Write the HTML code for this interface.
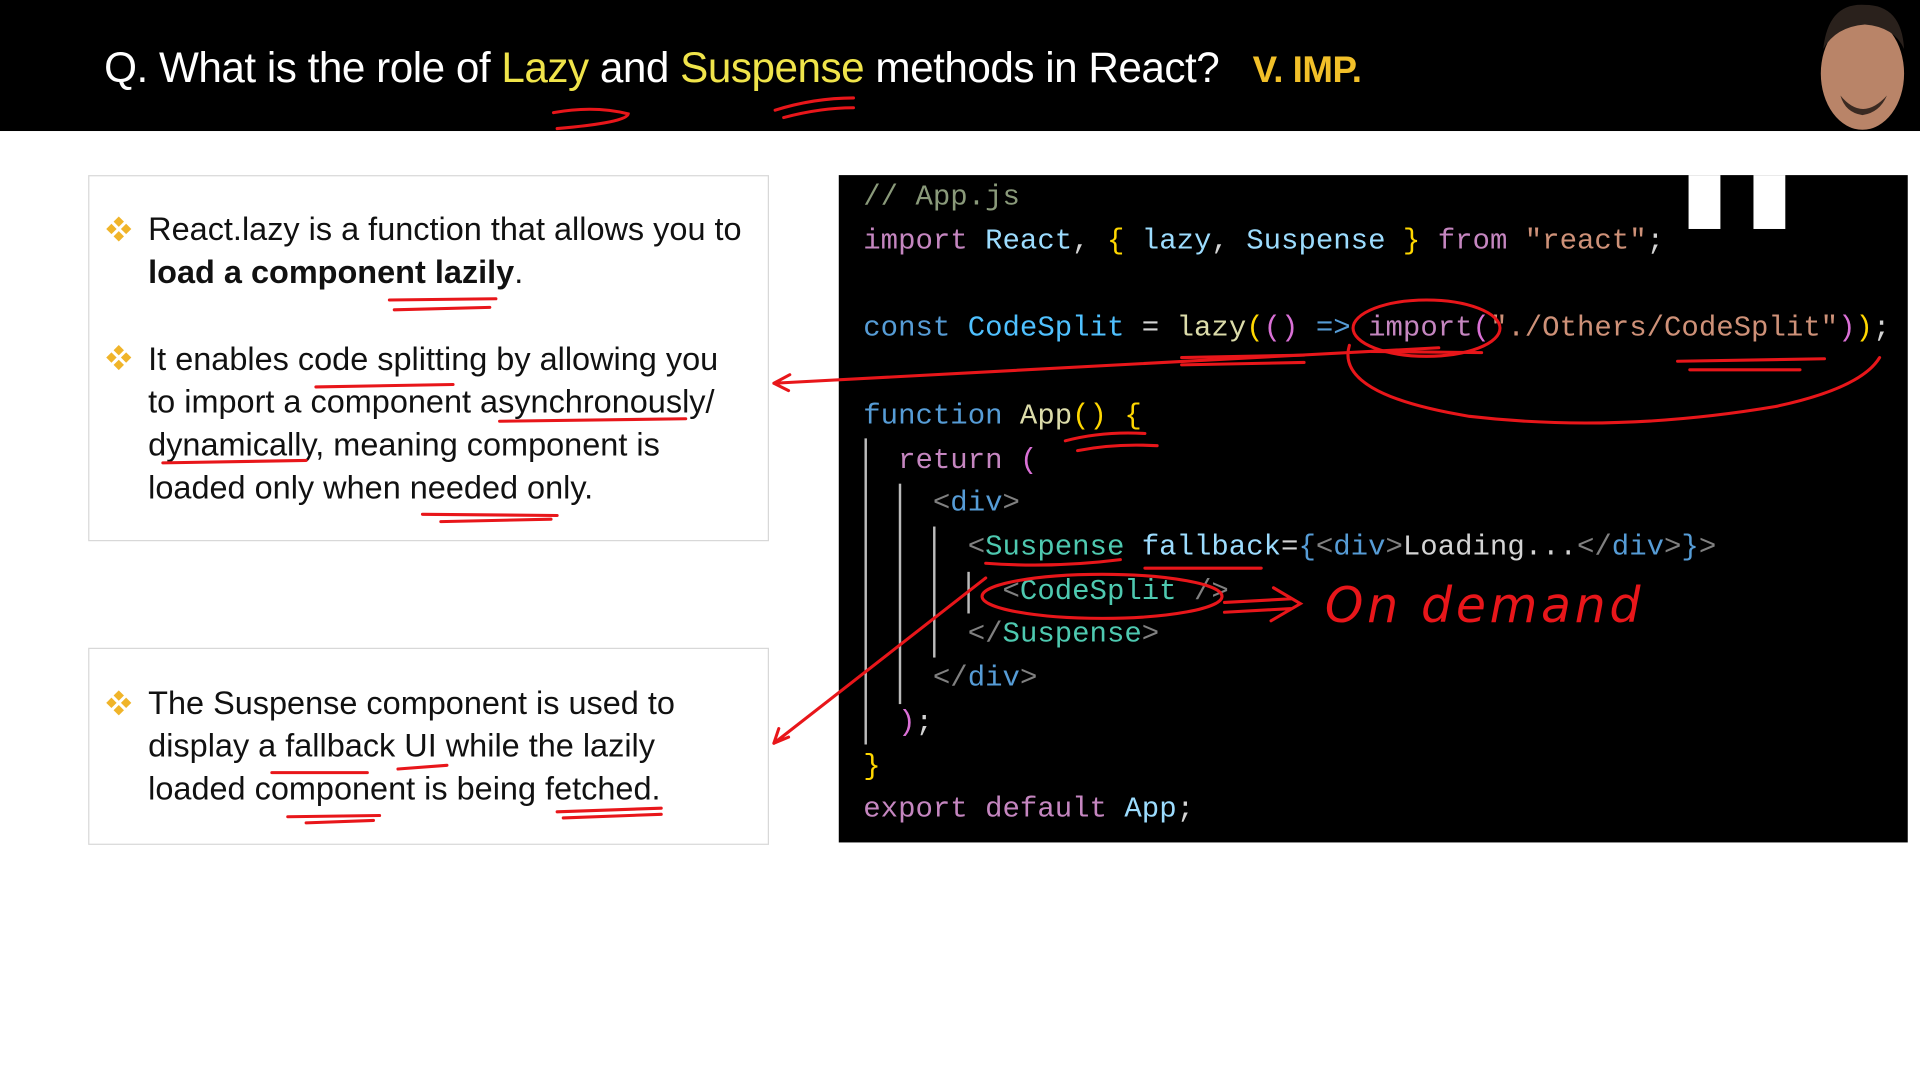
<!DOCTYPE html>
<html><head><meta charset="utf-8"><style>
html,body{margin:0;padding:0;background:#fff;width:1920px;height:1080px;overflow:hidden}
#w{position:absolute;left:0;top:0;width:1568px;height:882px;transform:scale(1.22449);transform-origin:0 0;font-family:"Liberation Sans",sans-serif}
.hdr{position:absolute;left:0;top:0;width:1568px;height:107px;background:#000}
.title{position:absolute;left:85px;top:37px;font-size:34.5px;color:#fff;white-space:nowrap;letter-spacing:-0.4px}
.y{color:#f0e44a}
.imp{color:#f2c029;font-weight:bold;margin-left:18px;font-size:30px}
.box{position:absolute;left:72px;width:554px;border:1px solid #d8d8d8;background:#fff}
.ln{position:absolute;left:121px;font-size:26.5px;color:#111;white-space:nowrap;line-height:35px}
.bul{position:absolute;left:86px;width:22px;height:22px}
.code{position:absolute;left:685px;top:143px;width:873px;height:545px;background:#000}
.cl{position:absolute;left:20px;font-family:"Liberation Mono",monospace;font-size:23.7px;white-space:pre;line-height:36px;color:#d4d4d4}
.cm{color:#8a9a7a}.kw{color:#c586c0}.v{color:#9cdcfe}.br{color:#ffd700}.bl{color:#569cd6}.cs{color:#4fc1ff}.fn{color:#dcdcaa}.st{color:#ce9178}.tg{color:#808080}.cp{color:#4ec9b0}.pk{color:#da70d6}
.gl{position:absolute;width:2px;background:#bbb}
</style></head><body><div id="w">
<div class="hdr"></div>
<div class="title">Q. What is the role of <span class="y">Lazy</span> and <span class="y">Suspense</span> methods in React? <span class="imp">V. IMP.</span></div>
<svg style="position:absolute;left:1475px;top:0" width="93" height="107"><ellipse cx="46" cy="60" rx="34" ry="46" fill="#b98468"/><path d="M14 40 Q18 2 48 4 Q78 4 80 40 Q72 22 48 20 Q24 22 14 40Z" fill="#2a211c"/><path d="M28 78 Q46 100 66 78 Q60 92 46 94 Q32 92 28 78Z" fill="#3a2a22"/></svg>

<div class="box" style="top:143px;height:297px"></div>
<div class="box" style="top:529px;height:159px"></div>
<svg class="bul" style="top:176px" viewBox="0 0 22 22"><g fill="#f0b429"><rect x="8" y="2" width="6" height="6" transform="rotate(45 11 5)"/><rect x="8" y="14" width="6" height="6" transform="rotate(45 11 17)"/><rect x="2" y="8" width="6" height="6" transform="rotate(45 5 11)"/><rect x="14" y="8" width="6" height="6" transform="rotate(45 17 11)"/></g></svg>
<svg class="bul" style="top:281px" viewBox="0 0 22 22"><g fill="#f0b429"><rect x="8" y="2" width="6" height="6" transform="rotate(45 11 5)"/><rect x="8" y="14" width="6" height="6" transform="rotate(45 11 17)"/><rect x="2" y="8" width="6" height="6" transform="rotate(45 5 11)"/><rect x="14" y="8" width="6" height="6" transform="rotate(45 17 11)"/></g></svg>
<svg class="bul" style="top:563px" viewBox="0 0 22 22"><g fill="#f0b429"><rect x="8" y="2" width="6" height="6" transform="rotate(45 11 5)"/><rect x="8" y="14" width="6" height="6" transform="rotate(45 11 17)"/><rect x="2" y="8" width="6" height="6" transform="rotate(45 5 11)"/><rect x="14" y="8" width="6" height="6" transform="rotate(45 17 11)"/></g></svg>
<div class="ln" style="top:170px">React.lazy is a function that allows you to</div>
<div class="ln" style="top:205px"><b>load a component lazily</b>.</div>
<div class="ln" style="top:276px">It enables code splitting by allowing you</div>
<div class="ln" style="top:311px">to import a component asynchronously/</div>
<div class="ln" style="top:346px">dynamically, meaning component is</div>
<div class="ln" style="top:381px">loaded only when needed only.</div>
<div class="ln" style="top:557px">The Suspense component is used to</div>
<div class="ln" style="top:592px">display a fallback UI while the lazily</div>
<div class="ln" style="top:627px">loaded component is being fetched.</div>

<div class="code">
<div style="position:absolute;left:694px;top:0;width:26px;height:44px;background:#fff"></div>
<div style="position:absolute;left:747px;top:0;width:26px;height:44px;background:#fff"></div>
<div class="gl" style="left:21px;top:215px;height:250px"></div>
<div class="gl" style="left:49px;top:252px;height:180px"></div>
<div class="gl" style="left:77px;top:287px;height:107px"></div>
<div class="gl" style="left:105px;top:324px;height:34px"></div>
<div class="cl" style="top:1px"><span class="cm">// App.js</span></div>
<div class="cl" style="top:37px"><span class="kw">import</span> <span class="v">React</span>, <span class="br">{</span> <span class="v">lazy</span>, <span class="v">Suspense</span> <span class="br">}</span> <span class="kw">from</span> <span class="st">"react"</span>;</div>
<div class="cl" style="top:108px"><span class="bl">const</span> <span class="cs">CodeSplit</span> = <span class="fn">lazy</span><span class="br">(</span><span class="pk">()</span> <span class="bl">=&gt;</span> <span class="kw">import</span><span class="pk">(</span><span class="st">"./Others/CodeSplit"</span><span class="pk">)</span><span class="br">)</span>;</div>
<div class="cl" style="top:180px"><span class="bl">function</span> <span class="fn">App</span><span class="br">()</span> <span class="br">{</span></div>
<div class="cl" style="top:216px">  <span class="kw">return</span> <span class="pk">(</span></div>
<div class="cl" style="top:251px">    <span class="tg">&lt;</span><span class="bl">div</span><span class="tg">&gt;</span></div>
<div class="cl" style="top:287px">      <span class="tg">&lt;</span><span class="cp">Suspense</span> <span class="v">fallback</span>=<span class="bl">{</span><span class="tg">&lt;</span><span class="bl">div</span><span class="tg">&gt;</span>Loading...<span class="tg">&lt;/</span><span class="bl">div</span><span class="tg">&gt;</span><span class="bl">}</span><span class="tg">&gt;</span></div>
<div class="cl" style="top:323px">        <span class="tg">&lt;</span><span class="cp">CodeSplit</span> <span class="tg">/&gt;</span></div>
<div class="cl" style="top:358px">      <span class="tg">&lt;/</span><span class="cp">Suspense</span><span class="tg">&gt;</span></div>
<div class="cl" style="top:394px">    <span class="tg">&lt;/</span><span class="bl">div</span><span class="tg">&gt;</span></div>
<div class="cl" style="top:430px">  <span class="pk">)</span>;</div>
<div class="cl" style="top:466px"><span class="br">}</span></div>
<div class="cl" style="top:501px"><span class="kw">export</span> <span class="kw">default</span> <span class="v">App</span>;</div>
</div>

<svg style="position:absolute;left:0;top:0" width="1568" height="882" viewBox="0 0 1568 882"><g fill="none" stroke="#e8161a" stroke-width="2.5" stroke-linecap="round">
<path d="M452 92 Q485 86 513 93 Q512 100 455 105"/>
<path d="M633 90 Q665 80 697 80 M640 96 Q670 88 697 88"/>
<path d="M318 245 L405 244 M322 253 L400 251"/>
<path d="M258 316 L370 314"/><path d="M408 344 L560 342"/><path d="M133 378 L250 376"/>
<path d="M345 420 L455 421 M360 426 L450 424"/>
<path d="M222 631 L300 631 M325 628 L365 625"/>
<path d="M235 667 L310 666 M250 672 L305 670"/>
<path d="M455 663 L540 660 M460 668 L540 665"/>
<path d="M1175 284 L632 313 M632 313 L645 306 M632 313 L644 319"/>
<path d="M965 292 L1065 290 M965 298 L1065 296"/>
<ellipse cx="1165" cy="268" rx="60" ry="23"/>
<path d="M1120 287 L1210 288"/>
<path d="M1102 282 Q1090 322 1200 340 Q1320 354 1450 332 Q1520 317 1535 292"/>
<path d="M1370 295 L1490 293 M1380 302 L1470 302"/>
<path d="M870 360 Q900 352 935 354 M880 368 Q910 362 945 364"/>
<path d="M805 460 Q860 464 915 457 M935 464 L1030 464"/>
<path d="M805 472 L632 607 M632 607 L636 595 M632 607 L644 602"/>
<ellipse cx="900" cy="487" rx="98" ry="18"/>
<path d="M1000 492 L1055 489 M1000 500 L1055 497 M1040 480 L1062 493 L1038 507"/>
</g>
<text x="1082" y="508" font-family="DejaVu Sans, sans-serif" font-style="italic" font-size="40" fill="#e8161a" letter-spacing="3" font-weight="300">On demand</text>
</svg>
</div></body></html>
